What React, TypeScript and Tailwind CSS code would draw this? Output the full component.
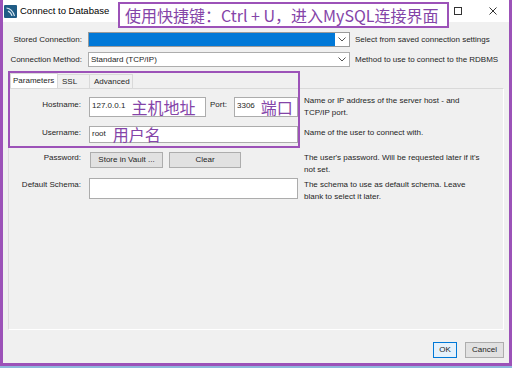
import React from 'react';

const purple = 'border-[#9c52b8]';

const Chevron = () => (
  <svg width="8" height="5" viewBox="0 0 8 5" className="shrink-0">
    <path d="M0.5 0.5 L4 4 L7.5 0.5" fill="none" stroke="#555" strokeWidth="1" />
  </svg>
);

const Label: React.FC<{ text: string; className?: string }> = ({ text, className = '' }) => (
  <div className={`w-[72px] shrink-0 text-right leading-[12px] ${className}`}>{text}</div>
);

const Help: React.FC<{ children: React.ReactNode; className?: string }> = ({ children, className = '' }) => (
  <div className={`w-[180px] ml-[6px] leading-[12px] ${className}`}>{children}</div>
);

const Note: React.FC<{ text: string; className?: string }> = ({ text, className = '' }) => (
  <span className={`shrink-0 whitespace-nowrap font-['Noto_Sans_CJK_SC',sans-serif] text-[16px] leading-[16px] text-[#8444a8] ${className}`}>{text}</span>
);

export default function App() {
  return (
    <div className="w-[512px] h-[368px] flex flex-col bg-[#8fb8dc] font-['Liberation_Sans',Arial,sans-serif] text-[8px] text-[#1e1e1e]">
      <div className={`relative flex-1 flex flex-col border-x-[3px] border-b-[3px] ${purple} bg-[#f0f0f0]`}>
        {/* title bar */}
        <div className="h-[22px] shrink-0 bg-white flex items-center pl-[1px]">
          <svg width="13" height="13" viewBox="0 0 13 13">
            <rect width="13" height="13" rx="1" fill="#1f5c86" />
            <path d="M2.5 3 C6 3.5 9 6 10.5 11 M4 6 C6 7 7.5 8.5 8 11" fill="none" stroke="#dbeaf4" strokeWidth="1.1" />
          </svg>
          <span className="ml-[3px] text-[9.5px] text-black">Connect to Database</span>
          <div className="ml-auto flex items-center gap-[27px] pr-[12px]">
            <svg width="8" height="8" viewBox="0 0 8 8">
              <rect x="0.5" y="0.5" width="7" height="7" fill="none" stroke="#333" strokeWidth="1" />
            </svg>
            <svg width="8" height="8" viewBox="0 0 8 8">
              <path d="M0.5 0.5 L7.5 7.5 M7.5 0.5 L0.5 7.5" stroke="#333" strokeWidth="1" />
            </svg>
          </div>
        </div>

        {/* annotation over the title bar */}
        <div className={`absolute left-[115px] top-[2px] w-[331px] h-[26px] bg-white border-2 ${purple} flex items-center pl-[5px] font-['Noto_Sans_CJK_SC',sans-serif] text-[16px] leading-[20px] text-[#8444a8] whitespace-nowrap`}>
          使用快捷键：Ctrl + U，进入MySQL连接界面
        </div>

        {/* connection rows */}
        <div className="flex flex-col pt-[10px]">
          <div className="flex items-center h-[15px]">
            <div className="w-[79px] text-right">Stored Connection:</div>
            <div className="ml-[6px] w-[262px] h-[15px] border border-[#9a9a9a] bg-white flex items-center">
              <div className="h-full flex-1 bg-[#0078d7]" />
              <div className="w-[14px] flex justify-center"><Chevron /></div>
            </div>
            <div className="ml-[5px]">Select from saved connection settings</div>
          </div>
          <div className="flex items-center h-[15px] mt-[5px]">
            <div className="w-[79px] text-right">Connection Method:</div>
            <div className="ml-[6px] w-[262px] h-[15px] border border-[#adadad] bg-white flex items-center pl-[2px]">
              <span className="flex-1">Standard (TCP/IP)</span>
              <div className="w-[14px] flex justify-center"><Chevron /></div>
            </div>
            <div className="ml-[5px]">Method to use to connect to the RDBMS</div>
          </div>
        </div>

        {/* tabs */}
        <div className="flex mt-[7px] ml-[7px] h-[14px] items-end">
          <div className="h-[15px] px-[2px] bg-white border border-b-0 border-[#d9d9d9] flex items-center w-[48px]">Parameters</div>
          <div className="h-[14px] w-[32px] pl-[4px] border-t border-r border-[#d9d9d9] bg-[#f0f0f0] flex items-center">SSL</div>
          <div className="h-[14px] w-[43px] pl-[4px] border-t border-r border-[#d9d9d9] bg-[#f0f0f0] flex items-center">Advanced</div>
        </div>

        {/* tab panel */}
        <div className="flex-1 mx-[5px] border border-t-[#d9d9d9] border-l-[#dcdcdc] border-r-white border-b-white flex flex-col">
          {/* hostname */}
          <div className="flex mt-[8px] h-[20px]">
            <Label text="Hostname:" className="pt-[2px]" />
            <div className="ml-[8px] w-[117px] h-[20px] border border-[#acacac] bg-white flex items-start pl-[2px]">
              <span className="leading-[12px] pt-[2px]">127.0.0.1</span>
              <Note text="主机地址" className="ml-[6px] mt-[1px]" />
            </div>
            <div className="ml-[4px] pt-[2px] leading-[12px] w-[24px]">Port:</div>
            <div className="w-[64px] h-[20px] border border-[#acacac] bg-white flex items-start pl-[2px]">
              <span className="leading-[12px] pt-[2px]">3306</span>
              <Note text="端口" className="ml-[6px] mt-[1px]" />
            </div>
            <Help className="-mt-[2px]">Name or IP address of the server host - and TCP/IP port.</Help>
          </div>

          {/* username */}
          <div className="flex mt-[9px] h-[17px]">
            <Label text="Username:" className="pt-[1px]" />
            <div className="ml-[8px] w-[209px] h-[17px] border border-[#acacac] bg-white flex items-start pl-[2px]">
              <span className="leading-[12px] pt-[1px]">root</span>
              <Note text="用户名" className="ml-[7px] -mt-[1px]" />
            </div>
            <Help className="pt-[1px]">Name of the user to connect with.</Help>
          </div>

          {/* password */}
          <div className="flex mt-[9px] h-[16px]">
            <Label text="Password:" />
            <div className="ml-[9px] w-[208px] flex gap-[6px]">
              <div className="w-[73px] h-[16px] border border-[#adadad] bg-[#e1e1e1] flex items-center justify-center">Store in Vault ...</div>
              <div className="w-[72px] h-[16px] border border-[#adadad] bg-[#e1e1e1] flex items-center justify-center">Clear</div>
            </div>
            <Help>The user's password. Will be requested later if it's not set.</Help>
          </div>

          {/* default schema */}
          <div className="flex mt-[10px] h-[21px]">
            <Label text="Default Schema:" className="pt-[1px]" />
            <div className="ml-[8px] w-[209px] h-[21px] border border-[#acacac] bg-white" />
            <Help className="pt-[1px]">The schema to use as default schema. Leave blank to select it later.</Help>
          </div>
        </div>

        {/* footer buttons */}
        <div className="shrink-0 flex justify-end gap-[8px] pt-[12px] pb-[5px] pr-[5px]">
          <div className="w-[24px] h-[16px] border border-[#0078d7] bg-[#e5f1fb] flex items-center justify-center">OK</div>
          <div className="w-[39px] h-[16px] border border-[#adadad] bg-[#e1e1e1] flex items-center justify-center">Cancel</div>
        </div>

        {/* highlight around the parameters */}
        <div className={`absolute left-[5px] top-[71px] w-[292px] h-[77px] border-2 ${purple}`} />
      </div>
      <div className="h-[2px] shrink-0" />
    </div>
  );
}
